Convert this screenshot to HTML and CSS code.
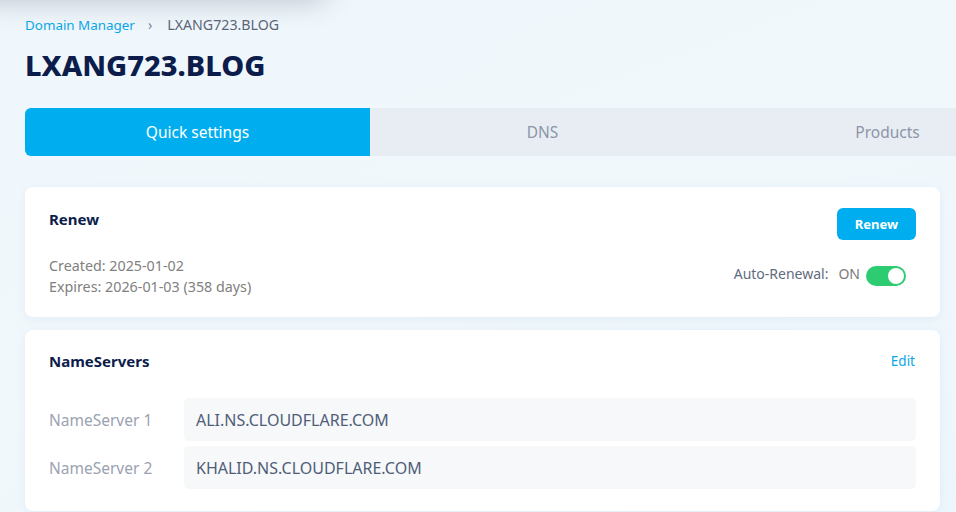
FILE: index.html
```html
<!DOCTYPE html>
<html lang="en">
<head>
<meta charset="utf-8">
<title>LXANG723.BLOG</title>
<link rel="stylesheet" href="styles.css">
</head>
<body>
<div class="page">
  <nav class="crumbs">
    <a class="crumb-link" href="#">Domain Manager</a>
    <span class="crumb-sep">›</span>
    <span class="crumb-current">LXANG723.BLOG</span>
  </nav>
  <h1 class="title">LXANG723.BLOG</h1>
  <div class="tabs">
    <div class="tab active">Quick settings</div>
    <div class="tab">DNS</div>
    <div class="tab">Products</div>
  </div>

  <section class="card renew-card">
    <div class="card-head">
      <h2 class="card-title">Renew</h2>
      <button class="btn">Renew</button>
    </div>
    <div class="renew-body">
      <div class="dates">
        <div>Created: 2025-01-02</div>
        <div>Expires: 2026-01-03 (358 days)</div>
      </div>
      <div class="auto">
        <span class="auto-label">Auto-Renewal:</span>
        <span class="auto-state">ON</span>
        <span class="toggle"><span class="knob"></span></span>
      </div>
    </div>
  </section>

  <section class="card ns-card">
    <div class="card-head">
      <h2 class="card-title">NameServers</h2>
      <a class="edit" href="#">Edit</a>
    </div>
    <div class="ns-rows">
      <div class="ns-row">
        <div class="ns-label">NameServer 1</div>
        <div class="ns-value">ALI.NS.CLOUDFLARE.COM</div>
      </div>
      <div class="ns-row">
        <div class="ns-label">NameServer 2</div>
        <div class="ns-value">KHALID.NS.CLOUDFLARE.COM</div>
      </div>
    </div>
  </section>
</div>
</body>
</html>
```

FILE: styles.css
```css
* { box-sizing: border-box; }
html, body { margin: 0; padding: 0; }
body {
  width: 956px;
  height: 512px;
  overflow: hidden;
  font-family: "Noto Sans", Lato, sans-serif;
  background: linear-gradient(160deg, #f0f7fc 0%, #f1f8fc 50%, #edf6fc 100%);
  position: relative;
}
body::before {
  content: "";
  position: absolute;
  top: -40px;
  left: -30px;
  width: 360px;
  height: 38px;
  border-radius: 20px;
  box-shadow: 0 4px 28px rgba(60, 70, 90, 0.28);
  background: #e9edf1;
}
.page {
  padding: 15px 0 0 25px;
  position: relative;
}
.crumbs {
  display: flex;
  align-items: center;
  font-size: 13.4px;
  line-height: 20px;
  height: 20px;
}
.crumb-link {
  color: #0aa6e8;
  text-decoration: none;
}
.crumb-sep {
  color: #7b8597;
  margin: 0 15px 0 13px;
  font-size: 14px;
}
.crumb-current { color: #5b6579; font-size: 14.2px; }
.title {
  margin: 14px 0 0;
  font-size: 29px;
  line-height: 32px;
  font-weight: 800;
  color: #0c1d4c;
  letter-spacing: 0;
}
.tabs {
  display: flex;
  width: 1035px;
  margin-top: 27px;
  height: 48px;
  background: #e8edf3;
  border-radius: 6px 0 0 6px;
}
.tab {
  flex: 0 0 345px;
  display: flex;
  align-items: center;
  justify-content: center;
  font-size: 15.5px;
  color: #8c96a8;
}
.tab.active {
  background: #00aef0;
  color: #fff;
  border-radius: 6px 0 0 6px;
}
.card {
  width: 915px;
  background: #fff;
  border-radius: 8px;
  box-shadow: 0 2px 10px rgba(120, 160, 200, 0.12);
  padding: 20px 24px 20px;
}
.renew-card { margin-top: 31px; padding-top: 21px; padding-bottom: 20px; }
.ns-card { margin-top: 13px; padding-bottom: 22px; }
.card-head {
  display: flex;
  justify-content: space-between;
  align-items: flex-start;
}
.card-title {
  margin: 0;
  font-size: 15px;
  line-height: 22px;
  font-weight: 700;
  color: #0c1d4c;
}
.btn {
  font-family: inherit;
  border: 0;
  background: #00aef0;
  color: #fff;
  font-weight: 700;
  font-size: 13px;
  width: 79px;
  height: 32px;
  border-radius: 6px;
  padding: 0;
}
.renew-body {
  display: flex;
  justify-content: space-between;
  align-items: flex-start;
  margin-top: 15px;
}
.dates {
  font-size: 14.3px;
  line-height: 21px;
  color: #808080;
}
.auto {
  display: flex;
  align-items: center;
  margin-top: 6px;
  margin-right: 10px;
  font-size: 14px;
}
.auto-label { color: #5f6b80; margin-right: 10px; }
.auto-state { color: #7a7a7a; margin-right: 6px; }
.toggle {
  width: 40px;
  height: 20px;
  border-radius: 10px;
  background: #2ecc71;
  position: relative;
  margin-top: 5px;
}
.knob {
  position: absolute;
  right: 2px;
  top: 2px;
  width: 16px;
  height: 16px;
  border-radius: 50%;
  background: #fff;
}
.ns-card .card-head { align-items: center; }
.edit {
  color: #0aa6e8;
  text-decoration: none;
  font-size: 13.5px;
  margin-right: 1px;
}
.ns-rows {
  margin-top: 26px;
  display: flex;
  flex-direction: column;
  gap: 5px;
}
.ns-row {
  display: flex;
  align-items: center;
}
.ns-label {
  width: 135px;
  font-size: 15.5px;
  color: #9aa2b1;
}
.ns-value {
  flex: 1;
  height: 43px;
  background: #f6f8fa;
  border-radius: 5px;
  padding: 0 12px;
  display: flex;
  align-items: center;
  font-size: 16px;
  color: #4f5d77;
}
```
